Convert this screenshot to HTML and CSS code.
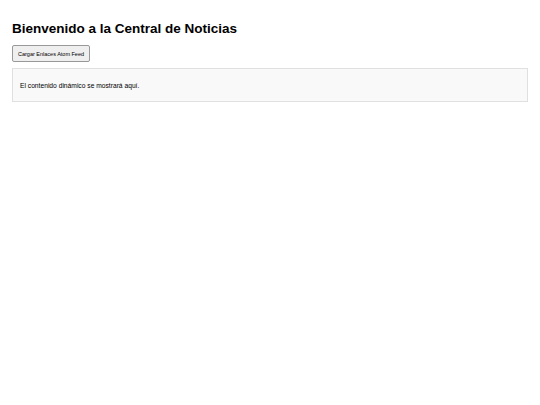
FILE: index.html
```html
<!DOCTYPE html>
<html lang="es">

<head>
    <meta charset="UTF-8">
    <meta name="viewport" content="width=device-width, initial-scale=1.0">
    <title>Central de Noticias</title>
    <link rel="stylesheet" href="styles.css">
</head>

<body>
    <h1>Bienvenido a la Central de Noticias</h1>
    <button id="load-feed">Cargar Enlaces Atom Feed</button>
    <div id="content">
        <p>El contenido dinámico se mostrará aquí.</p>
    </div>
</body>

</html>
```

FILE: styles.css
```css
body {
    font-family: "Liberation Sans", Arial, sans-serif;
    margin: 0;
    padding: 12px;
    color: #000;
    background-color: #fff;
}

h1 {
    font-size: 13.5px;
    margin: 8px 0 8px 0;
    line-height: 17px;
}

#load-feed {
    display: block;
    font-family: "Liberation Sans", Arial, sans-serif;
    font-size: 5.5px;
    height: 17px;
    padding: 0 5px;
    background-color: #efefef;
    border: 1px solid #999;
    border-radius: 2px;
    color: #000;
}

#content {
    margin-top: 6px;
    padding: 0 7px;
    height: 32px;
    display: flex;
    align-items: center;
    background-color: #f9f9f9;
    border: 1px solid #e0e0e0;
}

#content p {
    margin: 0;
    font-size: 6.7px;
}
```
